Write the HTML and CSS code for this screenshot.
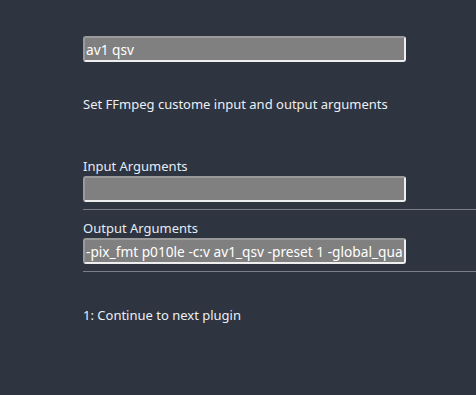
FILE: index.html
```html
<!DOCTYPE html>
<html>
<head>
<meta charset="utf-8">
<link rel="stylesheet" href="styles.css">
</head>
<body>
<div class="page">
  <input class="field first" type="text" value="av1 qsv">
  <p class="desc">Set FFmpeg custome input and output arguments</p>
  <div class="group">
    <label class="label">Input Arguments</label>
    <input class="field" type="text" value="">
  </div>
  <hr class="rule">
  <div class="group">
    <label class="label">Output Arguments</label>
    <input class="field" type="text" value="-pix_fmt p010le -c:v av1_qsv -preset 1 -global_quality 20">
  </div>
  <hr class="rule">
  <p class="output">1: Continue to next plugin</p>
</div>
</body>
</html>
```

FILE: styles.css
```css
html, body {
  margin: 0;
  padding: 0;
  background: #2e3440;
  height: 100%;
}
.page {
  padding: 36px 0 0 83px;
  font-family: "Noto Sans", "Open Sans", sans-serif;
  font-size: 13px;
  color: #eceff4;
}
.field {
  display: block;
  box-sizing: border-box;
  width: 323px;
  height: 26px;
  margin: 0;
  padding: 0 1px;
  background: #808080;
  color: #ffffff;
  font-family: inherit;
  font-size: 13.7px;
  border: 2px solid;
  border-color: #9a9a9a #eeeeee #eeeeee #9a9a9a;
  border-radius: 3px;
  outline: none;
}
.desc {
  margin: 33px 0 0 0;
  line-height: 18px;
}
.desc + .group {
  margin-top: 44px;
}
.label {
  display: block;
  line-height: 18px;
  margin-bottom: 1px;
  color: #e5ecf6;
}
.rule {
  margin: 7px 0 9px 0;
  border: 0;
  height: 1px;
  background: #7a7e86;
}
.output {
  margin: 34px 0 0 0;
  line-height: 18px;
}
```
